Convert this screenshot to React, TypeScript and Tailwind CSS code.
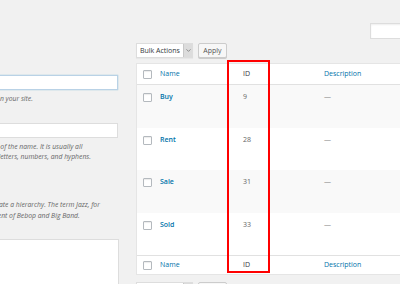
import { ChevronDown } from "lucide-react";

const rows = [
  { name: "Buy", id: "9", h: "h-[43px]", bg: "bg-[#f9f9f9]" },
  { name: "Rent", id: "28", h: "h-[42px]", bg: "bg-white" },
  { name: "Sale", id: "31", h: "h-[43px]", bg: "bg-[#f9f9f9]" },
  { name: "Sold", id: "33", h: "h-[42px]", bg: "bg-white" },
];

function Checkbox() {
  return (
    <div className="w-[9px] h-[9px] border border-[#b4b9be] bg-white rounded-[1px] shadow-[inset_0_1px_1px_rgba(0,0,0,0.08)]" />
  );
}

function BulkBar() {
  return (
    <div className="flex gap-[5px] h-[15px]">
      <div className="w-[57px] flex bg-white border border-[#dddddd] shadow-[0_1px_1px_rgba(0,0,0,0.04)]">
        <span className="flex-1 pl-[3px] leading-[13px] text-[7px] text-[#32373c]">
          Bulk Actions
        </span>
        <span className="w-[9px] flex items-center justify-center bg-[#dcdcdc] border-l border-[#c8c8c8]">
          <ChevronDown size={7} strokeWidth={2} className="text-[#555]" />
        </span>
      </div>
      <button className="w-[29px] bg-[#f7f7f7] border border-[#cccccc] rounded-[2px] text-[7px] leading-[13px] text-[#555] shadow-[0_1px_0_#ccc]">
        Apply
      </button>
    </div>
  );
}

function HeadRow({ top }: { top?: boolean }) {
  return (
    <div
      className={`shrink-0 grid grid-cols-[23px_83px_81px_1fr] items-center bg-white ${
        top ? "h-[21px] border-b border-[#e1e1e1]" : "h-[19px] border-t border-[#e1e1e1]"
      }`}
    >
      <div className="pl-[6px]">
        <Checkbox />
      </div>
      <span className="text-[#0073aa]">Name</span>
      <span className="text-[#32373c]">ID</span>
      <span className="text-[#0073aa]">Description</span>
    </div>
  );
}

export default function App() {
  return (
    <div
      className="relative w-[400px] h-[284px] overflow-hidden bg-[#f1f1f1] flex gap-[18px]"
      style={{ fontFamily: '"Open Sans", "Liberation Sans", sans-serif' }}
    >
      {/* left: add new term form, mostly off-screen */}
      <div className="w-[118px] shrink-0 flex flex-col pt-[75px]">
        <div className="shrink-0 h-[15px] -ml-[60px] bg-white border border-[#b9d2e6] shadow-[0_0_1px_rgba(30,140,190,0.5)]" />
        <p className="shrink-0 mt-[4px] -ml-[88px] whitespace-nowrap italic text-[6.8px] leading-[9px] text-[#666]">
          The name is how it appears on your site.
        </p>
        <div className="shrink-0 mt-[20px] h-[15px] -ml-[60px] bg-white border border-[#dddddd]" />
        <div className="shrink-0 mt-[4px] whitespace-nowrap italic text-[6.8px] leading-[10px] text-[#666]">
          <p className="-ml-[110px]">The “slug” is the URL-friendly version of the name. It is usually all</p>
          <p className="-ml-[88px]">lowercase and contains only letters, numbers, and hyphens.</p>
        </div>
        <div className="shrink-0 mt-[37px] -ml-[82px] whitespace-nowrap italic text-[6.8px] leading-[11px] text-[#666]">
          <p>Assign a parent term to create a hierarchy. The term Jazz, for</p>
          <p>example, would be the parent of Bebop and Big Band.</p>
        </div>
        <div className="shrink-0 mt-[18px] w-[117px] h-[60px] -ml-[60px] box-content pl-[60px] bg-white border border-[#dddddd]" />
      </div>

      {/* right: terms list table */}
      <div className="w-[300px] shrink-0 flex flex-col pt-[23px] text-[7px]">
        <div className="shrink-0 h-[16px] flex">
          <div className="ml-[234px] w-[60px] bg-white border border-[#dddddd] shadow-[inset_0_1px_2px_rgba(0,0,0,0.07)]" />
        </div>
        <div className="shrink-0 mt-[4px]">
          <BulkBar />
        </div>
        <div className="shrink-0 mt-[5px] flex flex-col border border-[#e5e5e5] bg-white">
          <HeadRow top />
          {rows.map((r) => (
            <div
              key={r.name}
              className={`shrink-0 grid grid-cols-[23px_83px_81px_1fr] items-start pt-[7px] ${r.h} ${r.bg}`}
            >
              <div className="pl-[6px] pt-[1px]">
                <Checkbox />
              </div>
              <span className="font-semibold text-[#0073aa] leading-[9px]">{r.name}</span>
              <span className="text-[#666] leading-[9px]">{r.id}</span>
              <span className="text-[#888] leading-[9px]">—</span>
            </div>
          ))}
          <HeadRow />
        </div>
        <div className="shrink-0 mt-[7px]">
          <BulkBar />
        </div>
      </div>

      {/* highlight annotation */}
      <div className="absolute left-[227px] top-[60px] w-[43px] h-[213px] border-2 border-[#ff0000]" />
    </div>
  );
}
